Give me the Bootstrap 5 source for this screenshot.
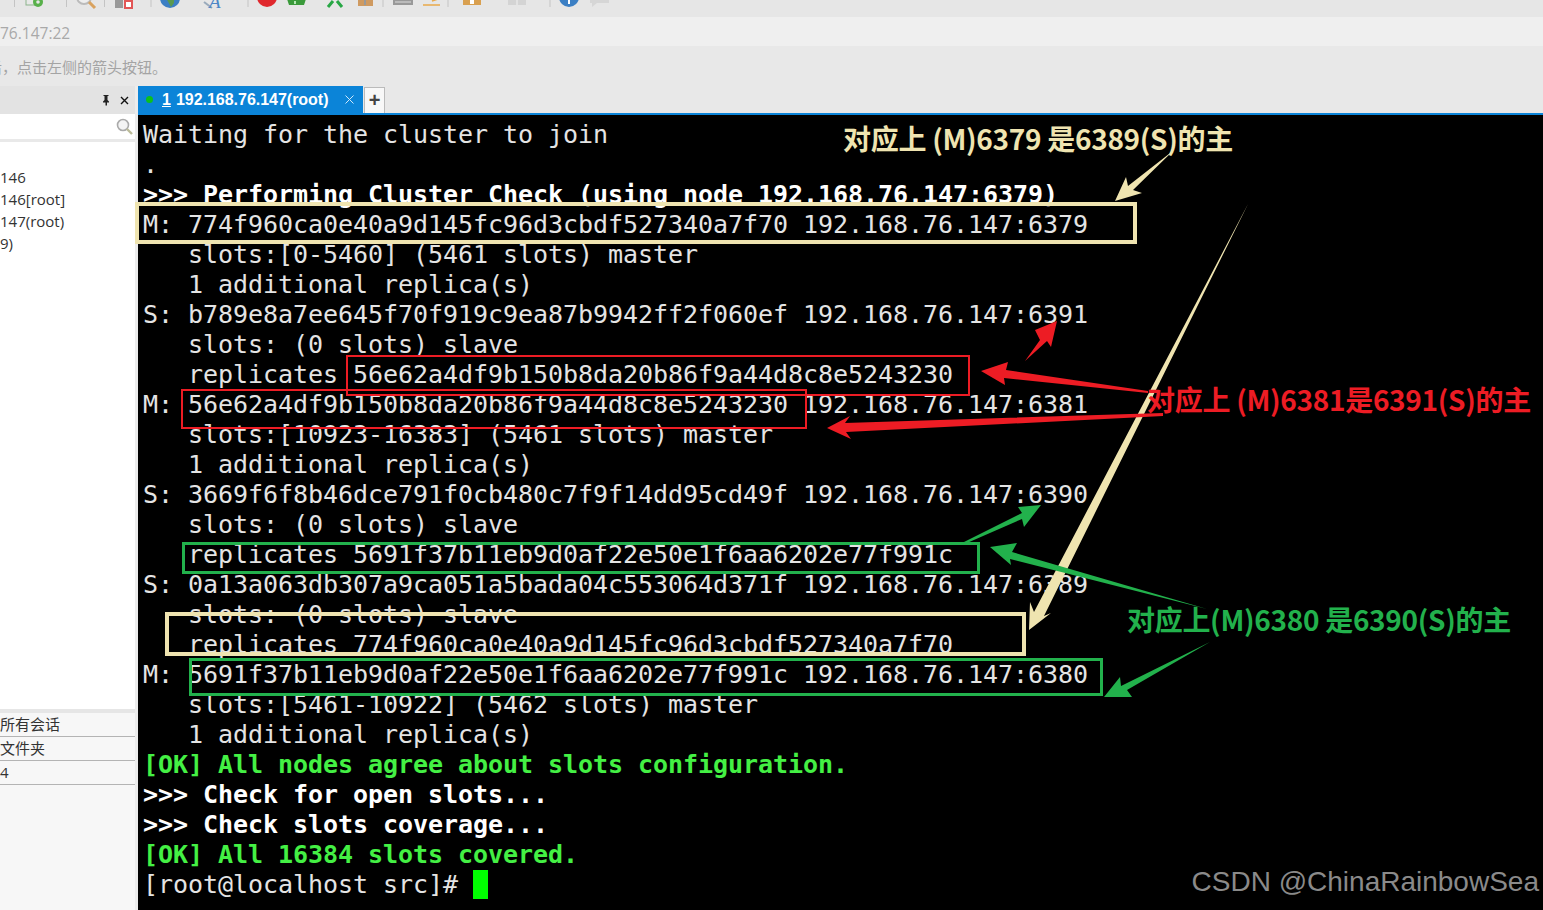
<!DOCTYPE html>
<html lang="zh">
<head>
<meta charset="utf-8">
<title>Xshell</title>
<link href="https://cdn.jsdelivr.net/npm/bootstrap@5.3.0/dist/css/bootstrap.min.css" rel="stylesheet">
<style>
html,body{height:910px;overflow:hidden;margin:0;background:#f5f5f5}
.tool-strip{height:17px;background:#e6e6e6;overflow:hidden}
.tool-strip svg{display:block}
.addr-strip{height:29px;background:#efefef;color:#a9a9a9;font:15.5px "Open Sans",sans-serif;line-height:32px;padding-left:0;white-space:nowrap}
.hint-strip{height:40px;background:#e8e8e8;color:#a4a4a4;font:15px "Noto Sans CJK SC",sans-serif;line-height:41px;white-space:nowrap;text-indent:-13px;overflow:hidden}
.main-split{height:824px}
.side-pane{width:135px;background:#f7f7f7;font:15px "Open Sans","Noto Sans CJK SC",sans-serif;color:#333}
.side-head{height:28px;background:#e3e3e3;gap:9px;padding-right:6px;color:#111}
.side-search{height:28px;background:#fff;border-bottom:3px solid #e9e9e9;padding-right:1px}
.side-tree{height:571px;background:#fff;padding-top:24px;border-bottom:4px solid #e6e6e6;line-height:22px}
.prop-row{height:24px;line-height:23px;border-bottom:1px solid #b4b4b4}
.pane-gap{width:3px;background:#ececec}
.term-col{width:1405px;min-width:0;position:relative}
.tab-strip{height:29px;background:#e8e8e8;border-bottom:2px solid #0b84d8}
.tab-on{width:225px;height:27px;background:#0b84d8;color:#fff;font:bold 16px "Liberation Sans",sans-serif;line-height:27px;padding-left:8px;white-space:nowrap;letter-spacing:-.02px}
.tab-dot{width:7px;height:7px;border-radius:50%;background:#0dc01c;margin-right:9px;flex:none}
.tab-num{text-decoration:underline;margin-right:5px}
.tab-x{margin-left:auto;margin-right:9px;line-height:0}
.tab-new{width:21px;height:26px;background:#f8f8f8;border:1px solid #bbb;border-bottom:0;margin:1px 0 0 1px;font:bold 20px/24px "Liberation Sans",sans-serif;color:#444;text-align:center}
.term-body{height:795px;background:#000;overflow:hidden;padding:5px 0 0 5px;color:#e4e4e4;font:25px/30px "DejaVu Sans Mono",monospace;letter-spacing:-.05px}
.term-line{height:30px;white-space:pre}
.t-b{font-weight:700;color:#fff}
.t-g{font-weight:700;color:#44f044}
.t-cur{display:inline-block;width:15px;height:29px;background:#0f0;vertical-align:top}
.mark-box{position:absolute;box-sizing:border-box;background:transparent}
.m-cream{border:4px solid #efe4b0}
.m-red{border:2px solid #ed1c24}
.m-green{border:3px solid #22b14c}
.note-txt{position:absolute;font:bold 28px/34px "Noto Sans CJK SC",sans-serif;white-space:nowrap;letter-spacing:-.3px}
.n-cream{color:#efe4b0}.n-red{color:#ed1c24}.n-green{color:#22b14c}
.draw-layer{position:absolute;left:0;top:0;pointer-events:none}
.water-mark{position:absolute;right:4px;bottom:10px;color:#8a8a8a;font:28px/36px "Liberation Sans",sans-serif;white-space:nowrap}
</style>
</head>
<body>
<div class="tool-strip">
<svg width="640" height="17" viewBox="0 0 640 17">
<g stroke="#c4c4c4"><path d="M14.5 0v7M66.5 0v7M104.5 0v7M151 0v7M248 0v7M383 0v7M448 0v7M550 0v7"/></g>
<rect x="26" y="-4" width="10" height="9" fill="#e8e8e8" stroke="#8bb38b"/>
<circle cx="38" cy="2" r="5" fill="#58b04a"/><circle cx="38" cy="2" r="1.8" fill="#e6e6e6"/>
<circle cx="84" cy="-3" r="7" fill="#eee" stroke="#bbb" stroke-width="2"/><path d="M89 2l6 6" stroke="#d9a25f" stroke-width="3"/>
<rect x="115" y="-3" width="8" height="11" fill="#999"/><rect x="125" y="1" width="7" height="7" fill="#fff" stroke="#e25555" stroke-width="2"/>
<circle cx="170" cy="-2" r="10" fill="#3b7fc4"/><path d="M166 -2h8v5l-3 4z" fill="#5a9a50"/>
<path d="M204 2l8 6" stroke="#9ab" stroke-width="2"/>
<text x="209" y="8" font-family="Liberation Serif" font-style="italic" font-size="19" fill="#4c86c6">A</text>
<circle cx="267" cy="-3" r="10" fill="#e0282d"/><circle cx="268" cy="-3" r="3" fill="#fff"/>
<path d="M287 -1h19l-2 6h-15z" fill="#3a9a3a"/><path d="M295 1v3" stroke="#dfd" stroke-width="1.5"/>
<path d="M328 7l5-6M342 7l-5-6" stroke="#28a745" stroke-width="3"/>
<rect x="358" y="-4" width="15" height="10" fill="#cf9a60"/><rect x="364" y="-1" width="2" height="6" fill="#999"/>
<rect x="393" y="-3" width="20" height="8" fill="#999"/><path d="M395 2h16" stroke="#ddd"/>
<path d="M423 5h17M432 1l6-2" stroke="#e9a94a" stroke-width="1.5"/>
<rect x="463" y="-4" width="18" height="9" fill="#d9a050"/><rect x="470" y="0" width="4" height="4" fill="#fff"/>
<rect x="508" y="-4" width="18" height="9" fill="#d4d4d4"/><path d="M517 -4v9" stroke="#f2f2f2"/>
<circle cx="569" cy="-3" r="10" fill="#3b7fc4"/><path d="M569 -1v5" stroke="#fff" stroke-width="2"/>
<path d="M590 -4h19v7h-12l-5 4v-4h-2z" fill="#d6d6d6"/>
</svg>
</div>
<div class="addr-strip"><span>76.147:22</span></div>
<div class="hint-strip">后，点击左侧的箭头按钮。</div>
<div class="main-split d-flex">
<aside class="side-pane d-flex flex-column flex-shrink-0">
<div class="side-head d-flex justify-content-end align-items-center">
<svg width="10" height="12" viewBox="0 0 10 12"><path d="M2.5 1h5v1h-1v4l1.5 1.5v1H6v3H4.500v-3H2v-1L3.500 6V2h-1z" fill="#222"/></svg>
<svg width="9" height="9" viewBox="0 0 9 9"><path d="M1 1l7 7M8 1l-7 7" stroke="#111" stroke-width="1.4"/></svg>
</div>
<div class="side-search d-flex justify-content-end align-items-center">
<svg width="19" height="19" viewBox="0 0 19 19"><circle cx="8" cy="8" r="5.500" fill="#f4f4f4" stroke="#aaa" stroke-width="1.600"/><path d="M12 12l5 5" stroke="#bb9" stroke-width="2.400"/></svg>
</div>
<div class="side-tree"><div>146</div><div>146[root]</div><div>147(root)</div><div>9)</div></div>
<div class="prop-row">所有会话</div><div class="prop-row">文件夹</div><div class="prop-row">4</div>
</aside>
<div class="pane-gap flex-shrink-0"></div>
<section class="term-col flex-grow-1">
<div class="tab-strip d-flex">
<div class="tab-on d-flex align-items-center"><span class="tab-dot"></span><span class="tab-num">1</span><span>192.168.76.147(root)</span><span class="tab-x"><svg width="9" height="9" viewBox="0 0 9 9"><path d="M.5.500l8 8M8.500.500l-8 8" stroke="#cfe8fa"/></svg></span></div>
<div class="tab-new">+</div>
</div>
<div class="term-body"><div class="term-line">Waiting for the cluster to join</div><div class="term-line">.</div><div class="term-line t-b">&gt;&gt;&gt; Performing Cluster Check (using node 192.168.76.147:6379)</div><div class="term-line">M: 774f960ca0e40a9d145fc96d3cbdf527340a7f70 192.168.76.147:6379</div><div class="term-line">   slots:[0-5460] (5461 slots) master</div><div class="term-line">   1 additional replica(s)</div><div class="term-line">S: b789e8a7ee645f70f919c9ea87b9942ff2f060ef 192.168.76.147:6391</div><div class="term-line">   slots: (0 slots) slave</div><div class="term-line">   replicates 56e62a4df9b150b8da20b86f9a44d8c8e5243230</div><div class="term-line">M: 56e62a4df9b150b8da20b86f9a44d8c8e5243230 192.168.76.147:6381</div><div class="term-line">   slots:[10923-16383] (5461 slots) master</div><div class="term-line">   1 additional replica(s)</div><div class="term-line">S: 3669f6f8b46dce791f0cb480c7f9f14dd95cd49f 192.168.76.147:6390</div><div class="term-line">   slots: (0 slots) slave</div><div class="term-line">   replicates 5691f37b11eb9d0af22e50e1f6aa6202e77f991c</div><div class="term-line">S: 0a13a063db307a9ca051a5bada04c553064d371f 192.168.76.147:6389</div><div class="term-line">   slots: (0 slots) slave</div><div class="term-line">   replicates 774f960ca0e40a9d145fc96d3cbdf527340a7f70</div><div class="term-line">M: 5691f37b11eb9d0af22e50e1f6aa6202e77f991c 192.168.76.147:6380</div><div class="term-line">   slots:[5461-10922] (5462 slots) master</div><div class="term-line">   1 additional replica(s)</div><div class="term-line t-g">[OK] All nodes agree about slots configuration.</div><div class="term-line t-b">&gt;&gt;&gt; Check for open slots...</div><div class="term-line t-b">&gt;&gt;&gt; Check slots coverage...</div><div class="term-line t-g">[OK] All 16384 slots covered.</div><div class="term-line">[root@localhost src]# <span class="t-cur"></span></div></div>
<div class="mark-box m-cream" style="left:-3px;top:116px;width:1002px;height:42px"></div>
<div class="mark-box m-red" style="left:208px;top:269px;width:624px;height:41px"></div>
<div class="mark-box m-red" style="left:43px;top:303px;width:626px;height:40px"></div>
<div class="mark-box m-green" style="left:44px;top:456px;width:798px;height:32px"></div>
<div class="mark-box m-cream" style="left:27px;top:526px;width:861px;height:44px"></div>
<div class="mark-box m-green" style="left:51px;top:572px;width:914px;height:38px"></div>
<svg class="draw-layer" width="1405" height="824" viewBox="138 86 1405 824">
<path d="M1115 201L1126 177L1128 186L1174 150L1133 190L1142 193Z" fill="#efe4b0"/>
<path d="M1029 630L1030 602L1034 612L1248 204L1044 616L1051 613Z" fill="#efe4b0"/>
<path d="M1057 321L1035 330L1040 340L1025 361L1047 341L1051 347Z" fill="#ed1c24"/>
<path d="M981 371L1008 362L1006 370L1148 391L1148 393L1004 378L1005 385Z" fill="#ed1c24"/>
<path d="M827 428L850 416L845 423L1163 413L1163 416L846 432L851 439Z" fill="#ed1c24"/>
<path d="M1041 505L1018 507L1022 513L964 542L967 543L1022 519L1024 527Z" fill="#22b14c"/>
<path d="M990 547L1017 543L1012 552L1207 609L1010 559L1011 565Z" fill="#22b14c"/>
<path d="M1104 697L1120 677L1121 686L1210 642L1127 690L1132 697Z" fill="#22b14c"/>
</svg>
<div class="note-txt n-cream" style="left:705px;top:35px">对应上 (M)6379 是6389(S)的主</div>
<div class="note-txt n-red" style="left:1009px;top:296px">对应上 (M)6381是6391(S)的主</div>
<div class="note-txt n-green" style="left:989px;top:516px">对应上(M)6380 是6390(S)的主</div>
<div class="water-mark">CSDN @ChinaRainbowSea</div>
</section>
</div>
</body>
</html>
